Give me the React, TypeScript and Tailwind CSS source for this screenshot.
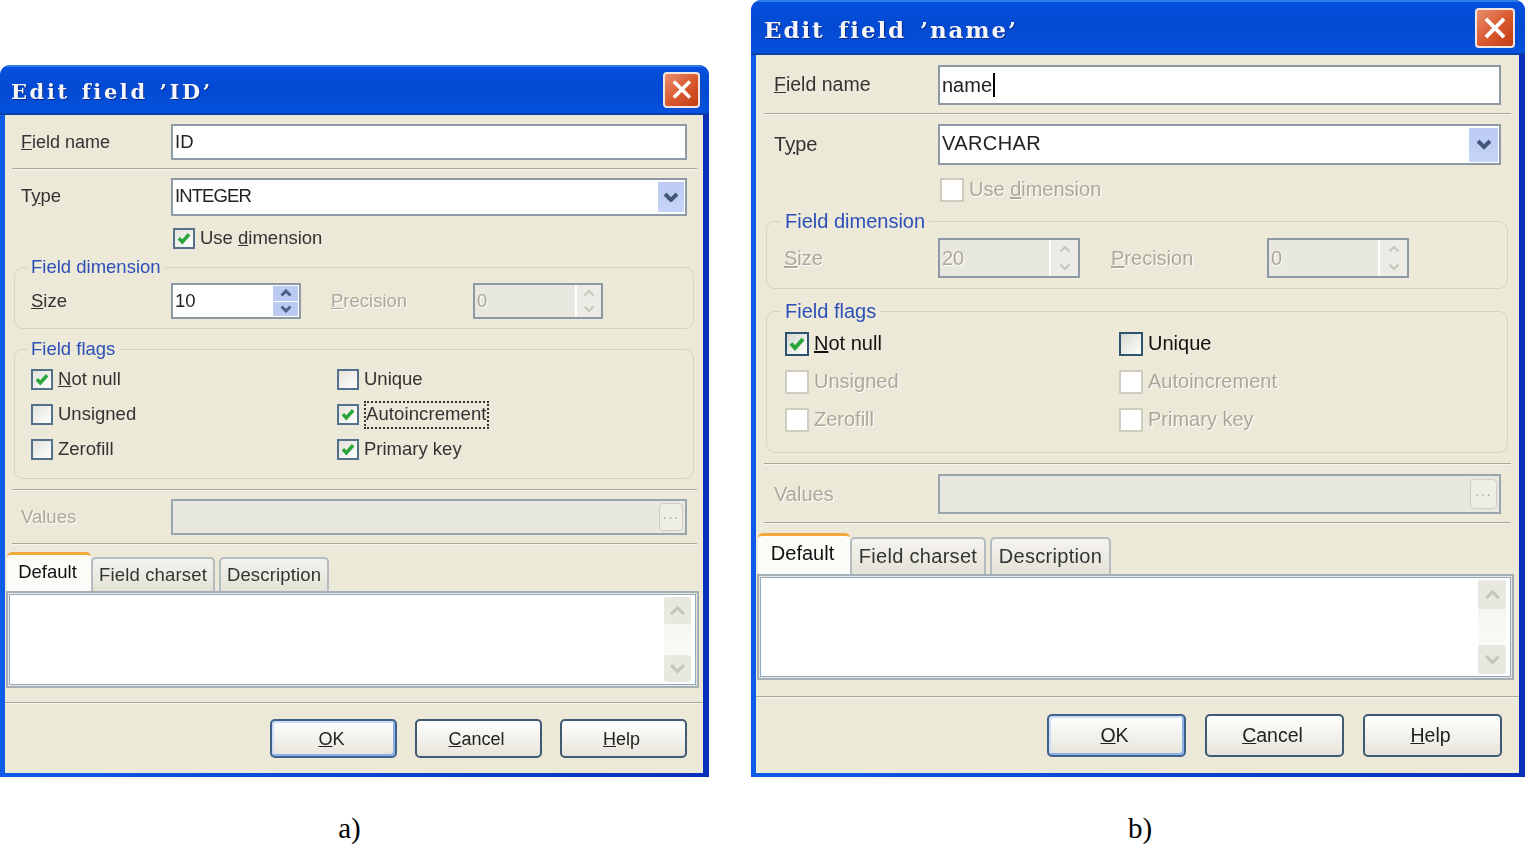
import type { ReactNode } from 'react'

// per-dialog sizes, the two screenshots are scaled differently
const small = {
  root: 'w-[709px] h-[712px] mt-[65px] text-[18.5px]',
  titleBar: 'h-[50px] pl-[11px] pr-[9px]',
  title: 'text-[21px] tracking-[2.6px] [word-spacing:2px] pt-[3px]',
  close: 'w-[37px] h-[36px]',
  row1: 'mt-[9px] pl-[16px]',
  label: 'w-[150px]',
  nameLabel: 'text-[18px]',
  input: 'w-[516px] h-[36px]',
  sep1: 'mt-[8px] ml-[7px] w-[685px]',
  row2: 'mt-[8px] pl-[16px]',
  combo: 'w-[516px] h-[38px]',
  comboText: 'tracking-[-0.9px] pb-[2px]',
  ddBtn: 'w-[26px] h-[30px]',
  useDim: 'mt-[12px] pl-[168px] h-[21px]',
  box: 'w-[22px] h-[21px]',
  legend: 'left-[12px]',
  groupDim: 'mt-[18px] ml-[9px] w-[680px] h-[62px] pt-[15px] pl-[16px]',
  sizeLabel: 'w-[140px]',
  spin: 'w-[130px] h-[36px]',
  spinBtn: 'w-[26px]',
  precLabel: 'ml-[30px] w-[142px]',
  groupFlags: 'mt-[20px] ml-[9px] w-[680px] h-[130px] pt-[12px] pl-[16px]',
  flagRow: 'h-[35px] grid-cols-[306px_1fr]',
  sep2: 'mt-[10px] ml-[7px] w-[685px]',
  row3: 'mt-[8px] pl-[16px]',
  dots: 'w-[24px] h-[28px]',
  sep3: 'mt-[8px] ml-[7px] w-[685px]',
  tabs: 'mt-[8px] ml-[2px] h-[38px]',
  tabOn: 'w-[84px]',
  tab1: 'w-[124px] h-[34px] tracking-[0.15px]',
  tab2: 'w-[110px] h-[34px] ml-[4px] tracking-[0.15px]',
  tabOnText: 'h-[36px] pb-[3px] pr-[3px]',
  panel: 'ml-[1px] w-[693px] h-[97px]',
  scroll: 'w-[27px] my-[2px] mr-[4px]',
  scrollBtn: 'h-[27px]',
  sep4: 'mt-[14px] w-full',
  btns: 'mt-[15px] pr-[16px] gap-[18px]',
  btn: 'w-[127px] h-[39px] text-[18px] pt-[1px]',
}

const large: typeof small = {
  root: 'w-[774px] h-[777px] text-[20px]',
  titleBar: 'h-[55px] pl-[13px] pr-[10px]',
  title: 'text-[23px] tracking-[1.9px] [word-spacing:4px] pt-[5px]',
  close: 'w-[40px] h-[40px]',
  row1: 'mt-[10px] pl-[18px]',
  label: 'w-[164px]',
  nameLabel: 'text-[19.5px]',
  input: 'w-[563px] h-[40px]',
  sep1: 'mt-[8px] ml-[8px] w-[747px]',
  row2: 'mt-[9px] pl-[18px]',
  combo: 'w-[563px] h-[41px]',
  comboText: 'tracking-[0.4px] pb-[3px]',
  ddBtn: 'w-[29px] h-[34px]',
  useDim: 'mt-[13px] pl-[184px] h-[24px]',
  box: 'w-[24px] h-[24px]',
  legend: 'left-[14px]',
  groupDim: 'mt-[19px] ml-[10px] w-[742px] h-[68px] pt-[16px] pl-[17px]',
  sizeLabel: 'w-[154px]',
  spin: 'w-[142px] h-[40px]',
  spinBtn: 'w-[29px]',
  precLabel: 'ml-[31px] w-[156px]',
  groupFlags: 'mt-[22px] ml-[10px] w-[742px] h-[142px] pt-[13px] pl-[18px]',
  flagRow: 'h-[38px] grid-cols-[334px_1fr]',
  sep2: 'mt-[10px] ml-[8px] w-[747px]',
  row3: 'mt-[9px] pl-[18px]',
  dots: 'w-[27px] h-[30px]',
  sep3: 'mt-[8px] ml-[8px] w-[747px]',
  tabs: 'mt-[9px] ml-[2px] h-[41px]',
  tabOn: 'w-[92px]',
  tab1: 'w-[136px] h-[37px] tracking-[0.3px]',
  tab2: 'w-[121px] h-[37px] ml-[4px] tracking-[0.3px]',
  tabOnText: 'h-[38px] pb-[4px] pr-[3px]',
  panel: 'ml-[1px] w-[757px] h-[106px]',
  scroll: 'w-[28px] my-[2px] mr-[4px]',
  scrollBtn: 'h-[29px]',
  sep4: 'mt-[16px] w-full',
  btns: 'mt-[16px] pr-[17px] gap-[19px]',
  btn: 'w-[139px] h-[43px] text-[19.5px]',
}

type Sizes = typeof small

const greyText = 'text-[#aca899] [text-shadow:1px_1px_0_#ffffff]'

function Sep({ className }: { className: string }) {
  return <div className={`h-[2px] border-t border-[#aca899] bg-[#f6f5ee] ${className}`} />
}

function Chevron({ up, color, width = 2.2, className }: { up?: boolean; color: string; width?: number; className?: string }) {
  return (
    <svg viewBox="0 0 12 8" className={className}>
      <path d={up ? 'M1.5 6.5 6 2l4.5 4.5' : 'M1.5 1.5 6 6l4.5-4.5'} fill="none" stroke={color} strokeWidth={width} />
    </svg>
  )
}

function Check({ s, on, off, active }: { s: Sizes; on?: boolean; off?: boolean; active?: boolean }) {
  return (
    <span
      className={`flex shrink-0 items-center justify-center border-2 ${s.box} ${
        off
          ? 'border-[#cfcdc0] bg-white'
          : active
            ? 'border-[#2f5270] bg-gradient-to-br from-[#d8d8d0] to-white'
            : 'border-[#54718c] bg-gradient-to-br from-[#e3e2da] to-white'
      }`}
    >
      {on && (
        <svg viewBox="0 0 20 20" className="h-full w-full">
          <path d="M4 9.5l4 4.5L16 5" fill="none" stroke="#2aa53a" strokeWidth="4" />
        </svg>
      )}
    </span>
  )
}

function Flag({
  s,
  on,
  off,
  active,
  focus,
  children,
}: {
  s: Sizes
  on?: boolean
  off?: boolean
  active?: boolean
  focus?: boolean
  children: ReactNode
}) {
  return (
    <div className="flex h-full items-center gap-[5px]">
      <Check s={s} on={on} off={off} active={active} />
      <span
        className={`pb-[2px] ${off ? greyText : active ? 'text-[#111]' : 'text-[#333]'} ${
          focus ? 'border-2 border-dotted border-[#333] leading-[22px] tracking-[0.1px]' : ''
        }`}
      >
        {children}
      </span>
    </div>
  )
}

function Spin({ s, value, off }: { s: Sizes; value: string; off?: boolean }) {
  return (
    <div className={`flex border-2 border-[#8d9aa6] ${off ? 'bg-[#e9e8e0]' : 'bg-white'} ${s.spin}`}>
      <span className={`flex flex-1 items-center pb-[1px] pl-[2px] ${off ? greyText : 'text-[#222]'}`}>{value}</span>
      <div className={`flex flex-col ${off ? 'border-l-2 border-white' : 'py-[1px] pr-[1px]'} ${s.spinBtn}`}>
        <span className={`flex flex-1 items-center justify-center ${off ? 'bg-[#ecebe5]' : 'mb-[1px] bg-[#bccbf2]'}`}>
          <Chevron up width={off ? 2.2 : 3} color={off ? '#c9c7bc' : '#4d6185'} className="w-[12px]" />
        </span>
        <span className={`flex flex-1 items-center justify-center ${off ? 'bg-[#ecebe5]' : 'bg-[#bccbf2]'}`}>
          <Chevron width={off ? 2.2 : 3} color={off ? '#c9c7bc' : '#4d6185'} className="w-[12px]" />
        </span>
      </div>
    </div>
  )
}

function Group({ s, className, legend, children }: { s: Sizes; className: string; legend: string; children: ReactNode }) {
  return (
    <div className={`relative rounded-[9px] border border-[#d6d3c2] ${className}`}>
      <span className={`absolute top-[-13px] bg-[#ece9d8] px-[4px] leading-[24px] text-[#2d4fb8] ${s.legend}`}>
        {legend}
      </span>
      {children}
    </div>
  )
}

function Btn({ s, primary, children }: { s: Sizes; primary?: boolean; children: ReactNode }) {
  return (
    <button
      className={`flex items-center justify-center rounded-[5px] border-2 bg-gradient-to-b from-white to-[#e6e4da] pr-[4px] text-[#222] ${s.btn} ${
        primary ? 'border-[#3f628c] shadow-[inset_-2px_-2px_0_#8fb0e6,inset_2px_2px_0_#cfdcf5]' : 'border-[#3f5a72]'
      }`}
    >
      {children}
    </button>
  )
}

function Dialog({
  s,
  title,
  name,
  type,
  caret,
  useDim,
  size,
  sizeOff,
  flags,
}: {
  s: Sizes
  title: string
  name: string
  type: string
  caret?: boolean
  useDim: boolean
  size: string
  sizeOff?: boolean
  flags: ReactNode
}) {
  const tabClass = 'flex items-center justify-center rounded-t-[5px] border-2 border-b-0 border-[#b4bcc0] pb-[1px]'
  return (
    <div
      className={`flex flex-col overflow-hidden rounded-t-[10px] bg-gradient-to-r from-[#0d5ce8] to-[#0a30b8] pr-[6px] pb-[4px] pl-[5px] blur-[0.4px] ${s.root}`}
      style={{ fontFamily: '"Liberation Sans", Arial, sans-serif' }}
    >
      <div
        className={`-ml-[5px] -mr-[6px] flex shrink-0 items-center justify-between border-t-2 border-b-2 border-t-[#2f7cec] border-b-[#0a3fa8] bg-gradient-to-b from-[#0450dc] via-[#0349d2] to-[#0552dc] ${s.titleBar}`}
      >
        <span
          className={`font-bold whitespace-pre text-[#f4f6fa] [text-shadow:1px_1px_0_#0c2a8c] ${s.title}`}
          style={{ fontFamily: '"DejaVu Serif", serif' }}
        >
          {title}
        </span>
        <span
          className={`flex items-center justify-center rounded-[4px] border-2 border-[#f2e6e0] bg-gradient-to-br from-[#e88e6e] via-[#da5a30] to-[#c23c12] ${s.close}`}
        >
          <svg viewBox="0 0 20 20" className="h-[72%] w-[72%]">
            <path d="M3 3l14 14M17 3 3 17" stroke="#fff" strokeWidth="3" />
          </svg>
        </span>
      </div>

      <div className="flex-1 bg-[#ece9d8] text-[#333]">
        <div className={`flex items-center ${s.row1}`}>
          <span className={`${s.label} ${s.nameLabel}`}>
            <u>F</u>ield name
          </span>
          <div className={`flex items-center border-2 border-[#8d9aa6] bg-white pl-[2px] text-[#222] ${s.input}`}>
            {name}
            {caret && <span className="ml-[1px] h-[24px] w-[2px] bg-black" />}
          </div>
        </div>
        <Sep className={s.sep1} />

        <div className={`flex items-center ${s.row2}`}>
          <span className={`pb-[2px] ${s.label}`}>
            T<u>y</u>pe
          </span>
          <div className={`flex items-center justify-between border-2 border-[#8d9aa6] bg-white pr-[1px] pl-[2px] text-[#222] ${s.combo}`}>
            <span className={s.comboText}>{type}</span>
            <span className={`flex items-center justify-center bg-gradient-to-b from-[#bccbf2] to-[#c6d4f8] ${s.ddBtn}`}>
              <Chevron width={3} color="#44587c" className="w-[16px]" />
            </span>
          </div>
        </div>

        <div className={s.useDim}>
          <Flag s={s} on={useDim} off={!useDim}>
            Use <u>d</u>imension
          </Flag>
        </div>

        <Group s={s} className={s.groupDim} legend="Field dimension">
          <div className="flex items-center">
            <span className={`${s.sizeLabel} ${sizeOff ? greyText : ''}`}>
              <u>S</u>ize
            </span>
            <Spin s={s} value={size} off={sizeOff} />
            <span className={`${s.precLabel} ${greyText}`}>
              <u>P</u>recision
            </span>
            <Spin s={s} value="0" off />
          </div>
        </Group>

        <Group s={s} className={s.groupFlags} legend="Field flags">
          {flags}
        </Group>
        <Sep className={s.sep2} />

        <div className={`flex items-center ${s.row3}`}>
          <span className={`${s.label} ${greyText}`}>Values</span>
          <div className={`flex items-center justify-end border-2 border-[#9aa6ae] bg-[#e9e8e0] pr-[2px] ${s.input}`}>
            <span className={`flex items-center justify-center rounded-[4px] border border-[#d0cfc4] bg-[#eeede6] text-[14px] leading-none tracking-[1px] text-[#aca899] ${s.dots}`}>
              ···
            </span>
          </div>
        </div>
        <Sep className={s.sep3} />

        <div className={`relative z-10 flex items-end ${s.tabs}`}>
          <div className={`rounded-t-[5px] border-t-[3px] border-[#f2a93b] bg-[#fbfbf7] ${s.tabOn}`}>
            <div className={`flex items-center justify-center text-[#111] ${s.tabOnText}`}>Default</div>
          </div>
          <div className={`${tabClass} bg-gradient-to-b from-[#f4f3ee] to-[#e4e2d6] ${s.tab1}`}>Field charset</div>
          <div className={`${tabClass} bg-gradient-to-b from-[#f4f3ee] to-[#e4e2d6] ${s.tab2}`}>Description</div>
        </div>

        <div className={`flex border-2 border-[#a4aeb4] bg-[#ece9d8] p-[1px] ${s.panel}`}>
          <div className="flex flex-1 justify-end border border-[#8fa9c8] bg-white">
            <div className={`flex flex-col justify-between bg-gradient-to-b from-[#f1f0ea] to-white ${s.scroll}`}>
              <span className={`flex items-center justify-center rounded-[3px] bg-[#e8e8e0] ${s.scrollBtn}`}>
                <Chevron up color="#c6c5ba" className="w-[17px]" />
              </span>
              <span className={`flex items-center justify-center rounded-[3px] bg-[#e8e8e0] ${s.scrollBtn}`}>
                <Chevron color="#c6c5ba" className="w-[17px]" />
              </span>
            </div>
          </div>
        </div>
        <Sep className={s.sep4} />

        <div className={`flex justify-end ${s.btns}`}>
          <Btn s={s} primary>
            <span>
              <u>O</u>K
            </span>
          </Btn>
          <Btn s={s}>
            <span>
              <u>C</u>ancel
            </span>
          </Btn>
          <Btn s={s}>
            <span>
              <u>H</u>elp
            </span>
          </Btn>
        </div>
      </div>
    </div>
  )
}

function Caption({ className, children }: { className: string; children: ReactNode }) {
  return (
    <div
      className={`mt-[34px] text-[29px] leading-[34px] text-black ${className}`}
      style={{ fontFamily: '"Liberation Serif", serif' }}
    >
      {children}
    </div>
  )
}

export default function App() {
  return (
    <div className="flex h-[844px] w-[1525px] items-start gap-[42px] overflow-hidden bg-white">
      <div className="flex flex-col items-center">
        <Dialog
          s={small}
          title="Edit field ’ID’"
          name="ID"
          type="INTEGER"
          useDim
          size="10"
          flags={
            <div className={`grid ${small.flagRow} auto-rows-[35px]`}>
              <Flag s={small} on>
                <u>N</u>ot null
              </Flag>
              <Flag s={small}>Unique</Flag>
              <Flag s={small}>Unsigned</Flag>
              <Flag s={small} on focus>
                Autoincrement
              </Flag>
              <Flag s={small}>Zerofill</Flag>
              <Flag s={small} on>
                Primary key
              </Flag>
            </div>
          }
        />
        <Caption className="pr-[10px]">a)</Caption>
      </div>
      <div className="flex flex-col items-center">
        <Dialog
          s={large}
          title="Edit field ’name’"
          name="name"
          type="VARCHAR"
          caret
          useDim={false}
          size="20"
          sizeOff
          flags={
            <div className={`grid ${large.flagRow} auto-rows-[38px]`}>
              <Flag s={large} on active>
                <u>N</u>ot null
              </Flag>
              <Flag s={large} active>
                Unique
              </Flag>
              <Flag s={large} off>
                Unsigned
              </Flag>
              <Flag s={large} off>
                Autoincrement
              </Flag>
              <Flag s={large} off>
                Zerofill
              </Flag>
              <Flag s={large} off>
                Primary key
              </Flag>
            </div>
          }
        />
        <Caption className="pl-[4px]">b)</Caption>
      </div>
    </div>
  )
}
